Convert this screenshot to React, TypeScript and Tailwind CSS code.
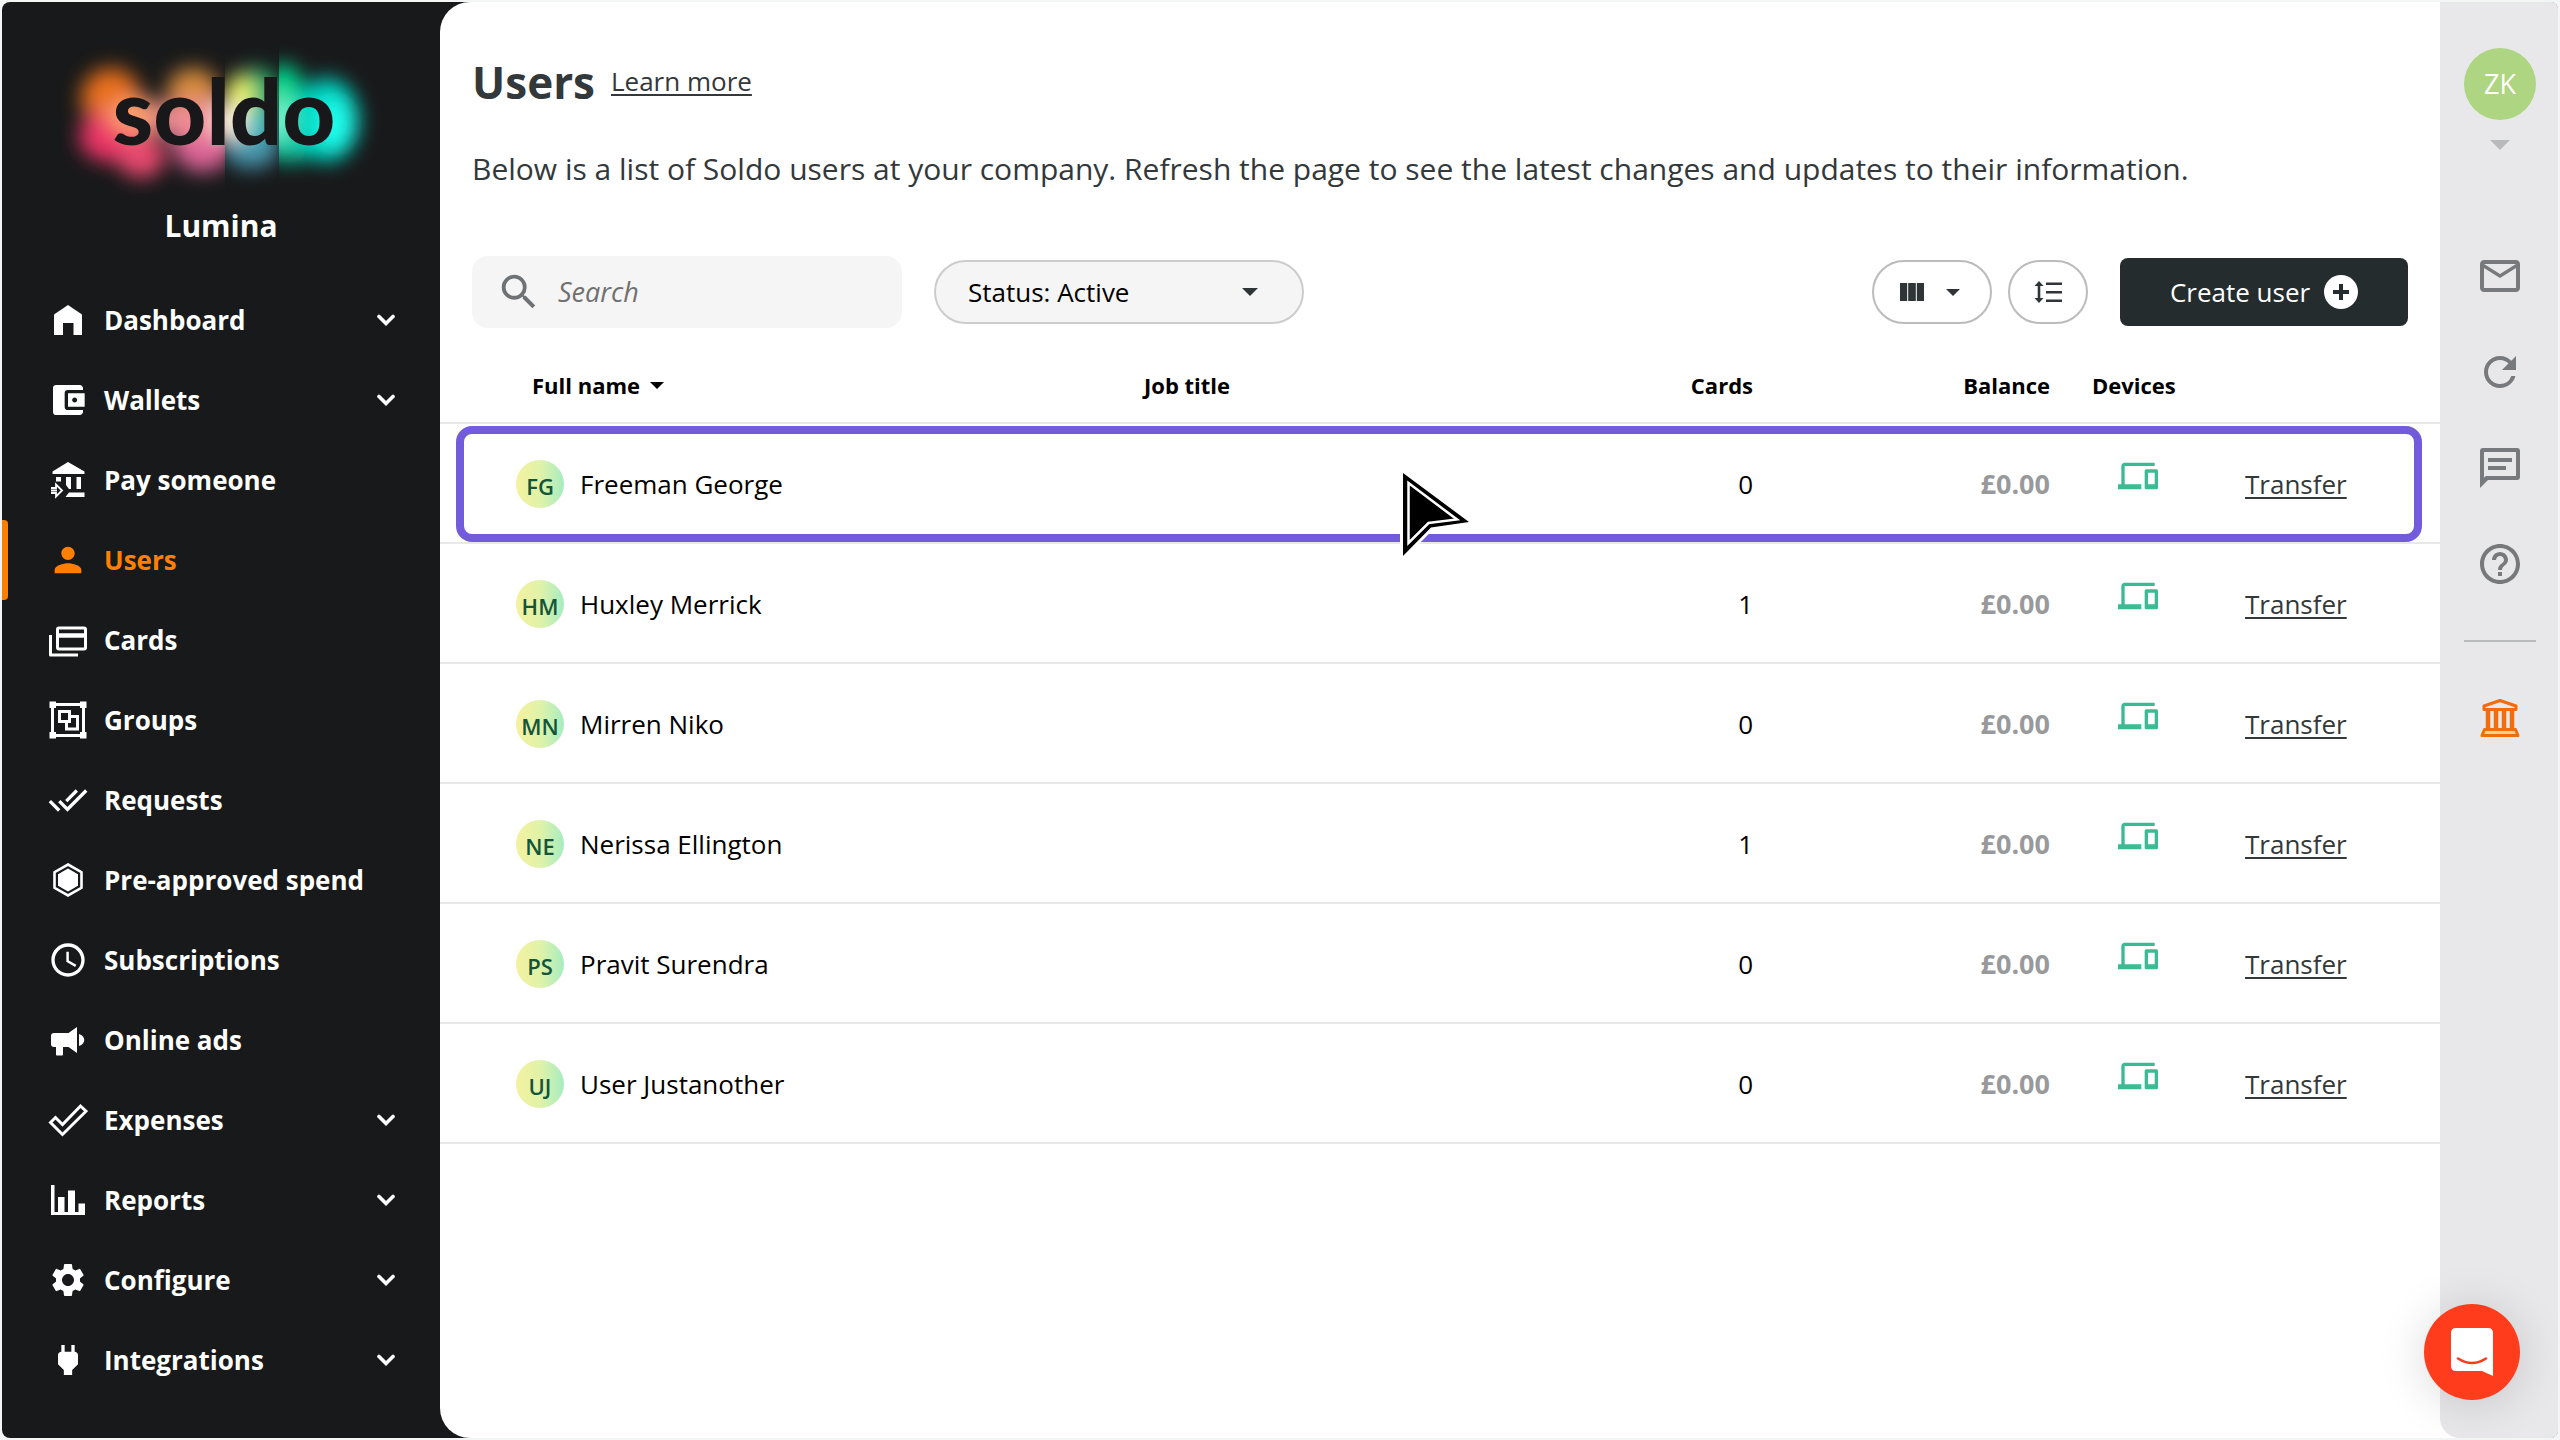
import React from "react";
import {
  MdAccessTime,
  MdAccountBalanceWallet,
  MdDoneAll,
  MdHelpOutline,
  MdMailOutline,
  MdOutlineDevices,
  MdPerson,
  MdPower,
  MdRefresh,
  MdSearch,
  MdSettings,
} from "react-icons/md";

type SvgProps = { className?: string; children: React.ReactNode };

function Glyph({ className = "size-10", children }: SvgProps) {
  return (
    <svg viewBox="0 0 40 40" className={className} fill="currentColor" aria-hidden="true">
      {children}
    </svg>
  );
}

const HomeIcon = () => (
  <Glyph>
    <path d="M6 14.500 20 5l14 9.500V35h-8.500V23h-10.500v12H6z" />
  </Glyph>
);

const PayIcon = () => (
  <Glyph>
    <path d="M4.500 14v-2.500L20 2l16.500 9.500V14zM8 17h5v4.500H8zM18 17h5v12h-2l-3-4zM28.500 17H33v12h-4.500zM21 32.500h15.500V37H17.500z" />
    <path
      d="M3 28h5v-3.500l6 6-6 6V33H3M3 30.500h6"
      fill="none"
      stroke="currentColor"
      strokeWidth="1.800"
    />
  </Glyph>
);

const CardsIcon = () => (
  <Glyph>
    <g fill="none" stroke="currentColor" strokeWidth="3" strokeLinejoin="round">
      <rect x="9.500" y="8" width="28" height="21" rx="1.500" />
      <path d="M9.500 15.500h28" strokeWidth="4.500" />
      <path d="M2.500 15v20H30" />
    </g>
  </Glyph>
);

const GroupsIcon = () => (
  <Glyph>
    <g fill="none" stroke="currentColor" strokeWidth="3">
      <path d="M4.500 4.500h31v31h-31z" />
      <path d="M18.500 18.500v10.500H29.500V16.500H21" />
      <path d="M11.500 11.500h10v10h-10z" fill="#18191a" />
    </g>
    <path d="M1.500 1.500h6.500v6.500h-6.500zM32 1.500h6.500v6.500H32zM1.500 32h6.500v6.500h-6.500zM32 32h6.500v6.500H32z" />
  </Glyph>
);

const HexagonIcon = () => (
  <Glyph>
    <path
      d="M20 4.500 33.500 12.200v15.600L20 35.500 6.500 27.800V12.200z"
      fill="none"
      stroke="currentColor"
      strokeWidth="2.600"
    />
    <path d="M20 8.500 30 14.200v11.600L20 31.500 10 25.800V14.200z" />
  </Glyph>
);

const MegaphoneIcon = () => (
  <Glyph>
    <path d="M6 13h14.500L29 7v26l-8.500-6H15v7.500q0 1-1 1H9q-1 0-1-1V27H6q-3 0-3-3v-8q0-3 3-3zM31 14c7 2 7 10 0 12z" />
  </Glyph>
);

const ExpensesIcon = () => (
  <Glyph>
    <path
      d="M2.500 22.500 7.500 17.500 14.500 24.500 32.500 6 38 11.200 14.500 34.500z"
      fill="none"
      stroke="currentColor"
      strokeWidth="3"
    />
  </Glyph>
);

const ReportsIcon = () => (
  <Glyph>
    <path d="M3 5h3.500v27H10V17h6.500v15H20V10.500h7V32h3.500v-8.500H37V35H3z" />
  </Glyph>
);

const BankIcon = () => (
  <Glyph>
    <g fill="none" stroke="currentColor" strokeWidth="3" strokeLinejoin="round">
      <path d="M20 2.500 36 8v3.500H4V8z" />
      <path d="M8 12v18M16 12v18M24 12v18M32 12v18" strokeWidth="4.500" />
      <path d="M4.500 31.500h31l2.500 6H2z" fill="#ffd08a" />
    </g>
  </Glyph>
);

const CommentIcon = () => (
  <Glyph>
    <path
      d="M3 0h34q3 0 3 3v26q0 3-3 3H8l-8 8V3q0-3 3-3zm1 4v25.500L6 28h30V4z"
      fillRule="evenodd"
    />
    <path d="M8 10h24v4H8zM8 18h18v4H8z" />
  </Glyph>
);

function ChevronIcon() {
  return (
    <svg viewBox="0 0 20 12" className="h-3 w-5" fill="none" aria-hidden="true">
      <path d="m3 2.500 7 7 7-7" stroke="currentColor" strokeWidth="3.600" strokeLinecap="round" />
    </svg>
  );
}

function Caret({ className }: { className: string }) {
  return (
    <svg viewBox="0 0 16 8" className={className} fill="currentColor" aria-hidden="true">
      <path d="M0 0h16L8 8z" />
    </svg>
  );
}

const md = "size-10";

const navItems: { label: string; icon: React.ReactNode; expands?: boolean; active?: boolean }[] = [
  { label: "Dashboard", icon: <HomeIcon />, expands: true },
  { label: "Wallets", icon: <MdAccountBalanceWallet className={md} />, expands: true },
  { label: "Pay someone", icon: <PayIcon /> },
  { label: "Users", icon: <MdPerson className={md} />, active: true },
  { label: "Cards", icon: <CardsIcon /> },
  { label: "Groups", icon: <GroupsIcon /> },
  { label: "Requests", icon: <MdDoneAll className={md} /> },
  { label: "Pre-approved spend", icon: <HexagonIcon /> },
  { label: "Subscriptions", icon: <MdAccessTime className={md} /> },
  { label: "Online ads", icon: <MegaphoneIcon /> },
  { label: "Expenses", icon: <ExpensesIcon />, expands: true },
  { label: "Reports", icon: <ReportsIcon />, expands: true },
  { label: "Configure", icon: <MdSettings className={md} />, expands: true },
  { label: "Integrations", icon: <MdPower className={md} />, expands: true },
];

const users = [
  { initials: "FG", name: "Freeman George", cards: 0 },
  { initials: "HM", name: "Huxley Merrick", cards: 1 },
  { initials: "MN", name: "Mirren Niko", cards: 0 },
  { initials: "NE", name: "Nerissa Ellington", cards: 1 },
  { initials: "PS", name: "Pravit Surendra", cards: 0 },
  { initials: "UJ", name: "User Justanother", cards: 0 },
];

function Logo() {
  return (
    <svg viewBox="0 0 320 160" className="h-40 w-80" role="img" aria-label="soldo">
      <defs>
        <filter id="glow" x="-30%" y="-30%" width="160%" height="160%">
          <feGaussianBlur stdDeviation="10" />
        </filter>
        <clipPath id="glow-left">
          <path d="M0 0h164v160H0z" />
        </clipPath>
        <clipPath id="glow-mid">
          <path d="M164 0h54v160h-54z" />
        </clipPath>
        <clipPath id="glow-right">
          <path d="M218 0h102v160H218z" />
        </clipPath>
      </defs>
      <g clipPath="url(#glow-left)">
        <g filter="url(#glow)">
          <ellipse cx="50" cy="58" rx="30" ry="30" fill="#e8701c" />
          <ellipse cx="132" cy="52" rx="26" ry="24" fill="#d98c3c" />
          <ellipse cx="50" cy="96" rx="32" ry="26" fill="#ec3468" />
          <ellipse cx="80" cy="116" rx="24" ry="22" fill="#e84a70" />
          <ellipse cx="76" cy="76" rx="30" ry="18" fill="#ffa070" />
          <ellipse cx="142" cy="106" rx="30" ry="26" fill="#dc6496" />
          <ellipse cx="134" cy="80" rx="46" ry="18" fill="#f08c94" />
          <ellipse cx="164" cy="80" rx="14" ry="22" fill="#ffd8d8" />
        </g>
      </g>
      <g clipPath="url(#glow-mid)">
        <g filter="url(#glow)">
          <ellipse cx="194" cy="54" rx="26" ry="26" fill="#20b070" />
          <ellipse cx="190" cy="108" rx="28" ry="20" fill="#4898b0" />
          <ellipse cx="178" cy="56" rx="14" ry="20" fill="#f4f868" />
          <ellipse cx="168" cy="82" rx="20" ry="18" fill="#fff0dc" />
          <ellipse cx="200" cy="84" rx="16" ry="16" fill="#40c0c0" />
        </g>
      </g>
      <g clipPath="url(#glow-right)">
        <g filter="url(#glow)">
          <ellipse cx="222" cy="50" rx="20" ry="26" fill="#00d890" />
          <ellipse cx="228" cy="96" rx="34" ry="26" fill="#10c8a0" />
          <ellipse cx="266" cy="80" rx="32" ry="42" fill="#00d8c4" />
          <ellipse cx="274" cy="84" rx="16" ry="24" fill="#20fff0" />
          <ellipse cx="216" cy="78" rx="12" ry="22" fill="#80ffd8" />
        </g>
      </g>
      <text
        x="163"
        y="105"
        textAnchor="middle"
        fill="#18181a"
        className="font-[Lato,sans-serif] text-[92px] font-black"
      >
        soldo
      </text>
    </svg>
  );
}

function Sidebar() {
  return (
    <aside className="flex w-[438px] shrink-0 flex-col text-white">
      <div className="flex h-[278px] flex-col items-center pt-[38px]">
        <Logo />
        <p className="mt-1 text-[30px] leading-11 font-bold">Lumina</p>
      </div>
      <nav aria-label="Main">
        {navItems.map((item) => (
          <a
            key={item.label}
            href="#"
            aria-current={item.active ? "page" : undefined}
            className={
              item.active
                ? "relative flex h-20 items-center gap-4 pr-11 pl-[46px] text-[#ff7f00]"
                : "relative flex h-20 items-center gap-4 pr-11 pl-[46px]"
            }
          >
            {item.active && <span className="absolute inset-y-0 left-0 w-1.5 rounded-r bg-[#ff7f00]" />}
            {item.icon}
            <span className="flex-1 text-[26px] leading-9 font-bold">{item.label}</span>
            {item.expands && <ChevronIcon />}
          </a>
        ))}
      </nav>
    </aside>
  );
}

function Toolbar() {
  return (
    <div className="flex h-[72px] items-center px-8">
      <div className="flex h-[72px] w-[430px] items-center rounded-2xl bg-[#f5f5f5] pl-6">
        <MdSearch className="size-[46px] shrink-0 text-[#6f7275]" />
        <input
          type="search"
          aria-label="Search users"
          placeholder="Search"
          className="ml-4 w-full min-w-0 bg-transparent text-[27px] italic outline-none placeholder:text-[#707070]"
        />
      </div>
      <div className="relative ml-8 flex h-16 w-[370px] items-center">
        <select
          aria-label="Status filter"
          className="h-16 w-full appearance-none rounded-full border-2 border-[#cccccc] bg-[#f5f5f5] pl-8 text-[26px] text-black"
        >
          <option>Status: Active</option>
          <option>Status: Inactive</option>
        </select>
        <Caret className="pointer-events-none absolute right-[46px] h-2 w-4 text-[#2f3437]" />
      </div>
      <div className="flex-1" />
      <button
        type="button"
        aria-label="Choose columns"
        className="flex h-16 w-[120px] items-center justify-between rounded-full border-2 border-[#bbbbbb] pr-[30px] pl-[26px] text-[#2f3437]"
      >
        <svg viewBox="0 0 24 20" className="h-5 w-6" fill="currentColor" aria-hidden="true">
          <path d="M0 1h7.200v18H0zM8.200 1h7.600v18H8.200zM16.800 1H24v18h-7.200z" />
        </svg>
        <Caret className="h-[7px] w-3.5" />
      </button>
      <button
        type="button"
        aria-label="Row density"
        className="ml-4 flex h-16 w-20 items-center justify-center rounded-full border-2 border-[#bbbbbb] text-[#2f3437]"
      >
        <svg viewBox="0 0 28 24" className="h-6 w-7" fill="currentColor" aria-hidden="true">
          <path d="M5 1 9.500 6H6.300v12h3.200L5 23 .5 18h3.200V6H.5z" />
          <path d="M12 2.500h16v2.500H12zM12 11h16v2.500H12zM12 19.500h16V22H12z" />
        </svg>
      </button>
      <button
        type="button"
        className="ml-8 flex h-[68px] w-72 items-center justify-center gap-3.5 rounded-lg bg-[#242c2e] text-[26px] text-white"
      >
        Create user
        <svg viewBox="0 0 34 34" className="size-[34px]" aria-hidden="true">
          <circle cx="17" cy="17" r="17" fill="white" />
          <path d="M17 9v16M9 17h16" stroke="#242c2e" strokeWidth="4" />
        </svg>
      </button>
    </div>
  );
}

function UsersTable() {
  return (
    <table className="mt-5 w-full table-fixed border-separate border-spacing-0">
      <colgroup>
        <col className="w-[35%]" />
        <col />
        <col className="w-[200px]" />
        <col className="w-[297px]" />
        <col className="w-[171px]" />
        <col className="w-[219px]" />
      </colgroup>
      <thead>
        <tr className="h-[76px] text-[22px] leading-8 font-bold text-black">
          <th scope="col" className="border-b-2 border-[#e8e8e8] pl-[92px] text-left">
            <button type="button" className="flex items-center gap-2.5">
              Full name
              <Caret className="h-[7px] w-3.5" />
            </button>
          </th>
          <th scope="col" className="border-b-2 border-[#e8e8e8] pl-1 text-left">Job title</th>
          <th scope="col" className="border-b-2 border-[#e8e8e8] text-right">Cards</th>
          <th scope="col" className="border-b-2 border-[#e8e8e8] text-right">Balance</th>
          <th scope="col" className="border-b-2 border-[#e8e8e8] pl-[42px] text-left">Devices</th>
          <th scope="col" aria-label="Actions" className="border-b-2 border-[#e8e8e8]" />
        </tr>
      </thead>
      <tbody>
        {users.map((user, index) => (
          <tr key={user.name} className="relative h-[120px] text-[26px] leading-9 text-black">
            <td className="border-b-2 border-[#e8e8e8] pt-0.5 pl-[76px]">
              {index === 0 && (
                <span className="pointer-events-none absolute top-0.5 right-[18px] bottom-0.5 left-4 rounded-2xl border-8 border-[#735cdb]" />
              )}
              <div className="flex items-center gap-4">
                <span className="flex size-12 items-center justify-center rounded-full bg-linear-to-r from-[#f4f2a0] via-[#e0f2a8] to-[#a5ecc0] pt-1 text-[22px] font-semibold text-[#14553a]">
                  {user.initials}
                </span>
                {user.name}
              </div>
            </td>
            <td className="border-b-2 border-[#e8e8e8]" />
            <td className="border-b-2 border-[#e8e8e8] pt-0.5 text-right">{user.cards}</td>
            <td className="border-b-2 border-[#e8e8e8] pt-0.5 text-right text-[27px] font-bold text-[#98999b]">
              £0.00
            </td>
            <td className="border-b-2 border-[#e8e8e8] pb-3.5 pl-[68px]">
              <MdOutlineDevices className="size-10 text-[#3cba94]" aria-label="Devices enabled" />
            </td>
            <td className="border-b-2 border-[#e8e8e8] pt-0.5 pl-6">
              <a href="#" className="text-[#33383b] underline decoration-2 underline-offset-3">
                Transfer
              </a>
            </td>
          </tr>
        ))}
      </tbody>
    </table>
  );
}

function Rail() {
  return (
    <aside className="flex w-[118px] shrink-0 flex-col items-center rounded-bl-[20px] bg-[#e8e8ea] pt-[46px] pl-0.5 text-[#77797d]">
      <button type="button" aria-label="Account menu" className="flex flex-col items-center">
        <span className="flex size-[72px] items-center justify-center rounded-full bg-[#aed581] text-[27px] text-white">
          ZK
        </span>
        <Caret className="mt-5 h-2.5 w-5 text-[#b9babc]" />
      </button>
      <button type="button" aria-label="Messages" className="mt-[102px]">
        <MdMailOutline className="size-12" />
      </button>
      <button type="button" aria-label="Refresh" className="mt-12">
        <MdRefresh className="size-12" />
      </button>
      <button type="button" aria-label="Comments" className="mt-[52px]">
        <CommentIcon />
      </button>
      <button type="button" aria-label="Help" className="mt-[52px]">
        <MdHelpOutline className="size-12" />
      </button>
      <hr className="mt-[52px] w-[72px] border-t-2 border-[#b9babc]" />
      <button type="button" aria-label="Bank account" className="mt-14 text-[#f06c0c]">
        <BankIcon />
      </button>
    </aside>
  );
}

export default function App() {
  return (
    <div className="relative min-h-screen bg-[#f4f5f5] p-0.5 font-['Open_Sans',sans-serif]">
      <div className="flex min-h-[calc(100vh-4px)] overflow-hidden rounded-lg bg-[#18191a]">
        <Sidebar />
        <div className="flex min-w-0 flex-1 rounded-l-[30px] bg-white">
          <main className="min-w-0 flex-1">
            <header className="px-8 pt-12">
              <div className="flex items-center gap-4">
                <h1 className="text-[44px] leading-[64px] font-bold text-[#33383b]">Users</h1>
                <a
                  href="#"
                  className="pb-0.5 text-[26px] leading-9 text-[#33383b] underline decoration-2 underline-offset-3"
                >
                  Learn more
                </a>
              </div>
              <p className="mt-8 mb-16 text-[30px] leading-[46px] text-[#33383b]">
                Below is a list of Soldo users at your company. Refresh the page to see the latest changes and
                updates to their information.
              </p>
            </header>
            <Toolbar />
            <UsersTable />
          </main>
          <Rail />
        </div>
      </div>

      <svg
        viewBox="0 0 76 96"
        className="pointer-events-none absolute top-[467px] left-[1399px] h-24 w-[76px]"
        aria-hidden="true"
      >
        <path d="M4 6 70 55 32 60.500 4 89z" fill="black" stroke="white" strokeWidth="6" />
        <path d="M4 6 70 55 32 60.500 4 89z" fill="black" />
        <path d="M9.500 16 58 52.500 29.500 56 9.500 76z" fill="black" stroke="white" strokeWidth="2.500" />
      </svg>

      <button
        type="button"
        aria-label="Open chat"
        className="absolute right-10 bottom-10 flex size-24 items-center justify-center rounded-full bg-[#ff3c1c] shadow-[0_4px_48px_rgba(0,0,0,0.15)]"
      >
        <svg viewBox="0 0 42 48" className="h-12 w-[42px]" aria-hidden="true">
          <path d="M5 0h32q5 0 5 5v43l-11-5H5q-5 0-5-5V5q0-5 5-5z" fill="white" />
          <path d="M7 30.500q14 9 28 0" fill="none" stroke="#ff3c1c" strokeWidth="2.500" strokeLinecap="round" />
        </svg>
      </button>
    </div>
  );
}
